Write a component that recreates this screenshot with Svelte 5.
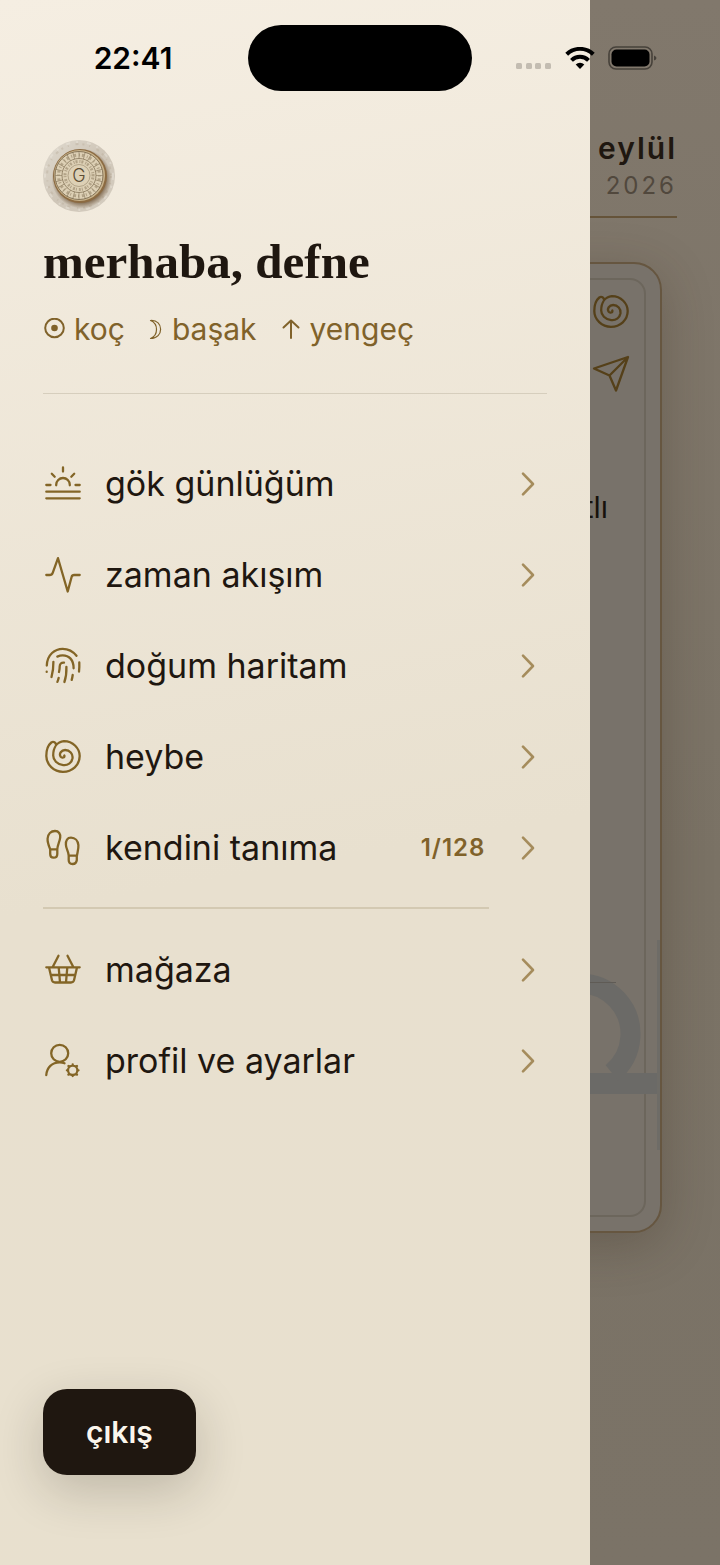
<script lang="ts">
  type Item = { label: string; icon: string; count?: string };

  const mainItems: Item[] = [
    { label: 'gök günlüğüm', icon: 'sun' },
    { label: 'zaman akışım', icon: 'pulse' },
    { label: 'doğum haritam', icon: 'finger' },
    { label: 'heybe', icon: 'spiral' },
    { label: 'kendini tanıma', icon: 'steps', count: '1/128' },
  ];
  const moreItems: Item[] = [
    { label: 'mağaza', icon: 'basket' },
    { label: 'profil ve ayarlar', icon: 'user' },
  ];

  const paths: Record<string, string> = {
    sun: 'M20 3.500v4M8.800 9.800l2.900 2.900M31.200 9.800l-2.900 2.900M3.300 21h4.200M32.500 21h4.200M13.200 21.300v-.5a6.800 6.800 0 0 1 13.600 0v.5M3.300 27.700h33.400M3.300 34.300h33.400',
    pulse: 'M3.300 20H6.600Q9 20 9.800 17.600L15 3.200 24.700 36.500 28.600 22Q29.100 20 31.200 20H36.700',
    finger:
      'M3.800 19.500C4.200 8.500 12 2.800 19.700 2.800 25.500 2.800 30 5.300 33.500 9.800M3.700 25.700v.2M36.300 16.500Q36.500 21 36 25.500M10.400 15.800Q10.500 24 8.500 31M14.300 10.600Q17 9.300 19.700 9.300C26 9.300 30.700 13.800 30.600 22.300M29.700 29Q29.400 31.500 28.700 33.800M16 26Q16.700 23.500 16.700 20.600C16.700 17.900 18.200 16.400 21 16.600M23.400 20.800Q23.700 29.500 21.400 36M15.700 31.800Q15.200 34 14.400 35.900',
    spiral:
      'M21.300 18.500c.8 2-2.400 3-3.700 1.200-1.900-3 .8-6.700 4.500-6.700 4.600 0 8 3.900 7.400 8.200-.8 4.600-4.800 7.500-9.300 6.900C14 27.300 10.200 23 10.200 18.500 10.200 10.500 14 5 21 4.200c9 0 15.700 7.200 15.700 14.900 0 9-7.500 15.700-16.700 15.700S3.300 27.500 3.300 19c0-5.800 1.700-10.800 5-13.500 2.300-1.500 4.700.2 4.800 2.700',
    steps:
      'M7.200 21.300C5.600 17.500 4.300 14 4.600 10.500 5 6.200 7.900 3 12 3c3.800 0 5.700 3 5.200 6.700-.6 4.200-2.800 7.300-2.900 11.600ZM7.200 21.300V26c0 2.300 1.200 3.700 3.400 3.700s3.700-1.400 3.700-3.700v-4.700M25.700 27.700C25.600 23.700 23 20.700 22.900 16.700 22.700 12.500 24.300 9.700 28 9.700c4.100 0 7 3.300 7.400 7.500.3 3.700-.9 7-1.500 10.500ZM25.700 27.700v4.300c0 2.600 1.700 4 3.900 4 2.300 0 3.900-1.400 4.200-4v-4.300',
    basket:
      'M3.300 17.300H36.700M15.500 5.700 9.700 17M24.500 5.700 30.300 17M6 17.500 9 30.300Q9.600 32.500 12 32.500H28Q30.400 32.500 31 30.300L34 17.500M7.700 25H32.300M15.700 17.500 17 32.300M24.300 17.500 23 32.300',
    user:
      'M3.300 34C3.800 26.500 9 21.300 16.700 21.300Q19.300 21.300 21.500 22.200M25.200 12.300a8.500 8.500 0 1 1-17 0a8.500 8.500 0 1 1 17 0M34.400 29.300a4.700 4.700 0 1 1-9.400 0a4.700 4.700 0 1 1 9.400 0M29.700 24.500v-1M29.700 34.100v1M24.900 29.300h-1M34.500 29.300h1M26.300 25.900l-.9-.9M33.100 25.900l.9-.9M26.300 32.700l-.9.9M33.100 32.700l.9.9',
  };

  const ticks = Array.from({ length: 24 }, (_, i) => i * 15);
</script>

{#snippet glyph(name: string)}
  <svg class="glyph" viewBox="0 0 40 40" aria-hidden="true"><path d={paths[name]} /></svg>
{/snippet}

{#snippet row(item: Item)}
  <li>
    <button class="row">
      {@render glyph(item.icon)}
      <span class="label">{item.label}</span>
      {#if item.count}<span class="count">{item.count}</span>{/if}
      <svg class="chevron" viewBox="0 0 16 26" aria-hidden="true"><path d="M4 2.700 14 13 4 23.300" /></svg>
    </button>
  </li>
{/snippet}

<div class="screen">
  <main class="page">
    <header class="date">
      <strong>eylül</strong>
      <span>2026</span>
    </header>
    <section class="card">
      <svg class="watermark" viewBox="0 0 160 220" aria-hidden="true">
        <rect class="edge" x="157" y="0" width="3" height="210" />
        <rect x="0" y="133" width="157" height="21" />
        <path class="ring" d="M48 133A50.500 50.500 0 1 1 112 133" />
        <path class="hair" d="M80 42.500H116" />
      </svg>
      <div class="frame">
        {@render glyph('spiral')}
        <svg class="glyph" viewBox="0 0 40 40" aria-hidden="true"><path d="M37 3 3 14.500 18.500 21.500 25 36.500ZM37 3 18.500 21.500" /></svg>
        <p>tlı</p>
      </div>
    </section>
  </main>

  <aside class="drawer">
    <svg class="avatar" viewBox="0 0 72 72" aria-hidden="true">
      <defs>
        <linearGradient id="stone" x1="0" y1="0" x2="1" y2="1">
          <stop offset="0" stop-color="#e0dacf" />
          <stop offset=".5" stop-color="#cfc6b8" />
          <stop offset="1" stop-color="#d5cdc0" />
        </linearGradient>
        <radialGradient id="shade">
          <stop offset=".78" stop-color="#6a5032" stop-opacity=".8" />
          <stop offset="1" stop-color="#6a5032" stop-opacity="0" />
        </radialGradient>
      </defs>
      <circle cx="36" cy="36" r="36" fill="url(#stone)" />
      <g fill="none" stroke="#b9ac99" stroke-width="2" stroke-dasharray="2 5 1 7 3 4" opacity=".4">
        <circle cx="36" cy="36" r="32" />
        <circle cx="36" cy="36" r="34" stroke="#f0ebe2" stroke-dasharray="4 6 2 9" />
      </g>
      <circle cx="38.500" cy="38.500" r="30" fill="url(#shade)" />
      <circle cx="37" cy="36" r="27" fill="#8c6b42" />
      <circle cx="36.500" cy="35.500" r="25.500" fill="#c8b38c" />
      <circle cx="36" cy="35.500" r="24" fill="#ddd0b5" />
      <g fill="none" stroke="#87765a">
        <circle cx="36" cy="35.500" r="24" />
        <circle cx="36" cy="35.500" r="17" stroke-width=".8" />
        <circle cx="36" cy="35.500" r="11" stroke-width=".5" />
        <circle cx="36" cy="35.500" r="20.500" stroke-width="3" stroke-dasharray="1 2 2 3" opacity=".5" />
        <circle cx="36" cy="35.500" r="14" stroke-width="3" stroke-dasharray="1 1 2 2" opacity=".5" />
        {#each ticks as a}
          <path d="M36 11.500v7" stroke-width=".6" transform="rotate({a} 36 35.500)" />
        {/each}
      </g>
      <text x="36" y="41.500" text-anchor="middle">G</text>
    </svg>

    <h1>merhaba, defne</h1>

    <p class="signs">
      <span>
        <svg class="sun" viewBox="0 0 22 22" aria-hidden="true"><circle cx="11.500" cy="10" r="9.300" /><circle class="dot" cx="11.500" cy="10" r="3.300" /></svg>
        koç
      </span>
      <span>
        <svg class="moon" viewBox="0 0 14 22" aria-hidden="true"><path d="M1.500 2.500C15 1.500 15 20.500 1.500 20.500 9.500 17.500 9.500 5.500 1.500 2.500Z" /></svg>
        başak
      </span>
      <span>
        <svg class="up" viewBox="0 0 20 22" aria-hidden="true"><path d="M10 20V2.500M2.500 9.500 10 2.500 17.500 9.500" /></svg>
        yengeç
      </span>
    </p>

    <nav>
      <ul>{#each mainItems as item}{@render row(item)}{/each}</ul>
      <hr />
      <ul>{#each moreItems as item}{@render row(item)}{/each}</ul>
    </nav>

    <button class="exit">çıkış</button>
  </aside>

  <div class="status">
    <time>22:41</time>
    <div class="island"></div>
    <div class="signal">
      <svg class="dots" viewBox="0 0 36 8" aria-hidden="true">
        {#each [0, 10, 19, 29] as x}<rect {x} y="1" width="6" height="6" rx="1.500" />{/each}
      </svg>
      <svg class="wifi" viewBox="0 0 30 22" aria-hidden="true">
        <path class="arc" d="M1.700 7.300A19 19 0 0 1 28.300 7.300M6.500 13.300A12 12 0 0 1 23.500 13.300" />
        <path d="M15 22 10.700 17.500A6.500 6.500 0 0 1 19.300 17.500Z" />
      </svg>
      <svg class="battery" viewBox="0 0 50 24" aria-hidden="true">
        <rect class="shell" x="1" y="1" width="43" height="22" rx="7" />
        <rect x="3.500" y="3.500" width="38" height="17" rx="5" />
        <path class="cap" d="M46 9.500Q48.500 10.500 48.500 12T46 14.500Z" />
      </svg>
    </div>
  </div>
</div>

<style>
  :global(body) { margin: 0; background: #7b7367; }
  * { box-sizing: border-box; }
  .screen {
    position: relative;
    min-height: 100vh;
    overflow: hidden;
    font-family: Inter, "Noto Sans", sans-serif;
    color: #1f1710;
    background: linear-gradient(#81786c, #7a7265 55%, #7b7367);
  }
  .glyph { flex: none; width: 40px; height: 40px; fill: none; stroke: #836526; stroke-width: 2.3; stroke-linecap: round; stroke-linejoin: round; }

  .page { padding: 129px 43px 0; }
  .date {
    display: flex;
    flex-direction: column;
    align-items: flex-end;
    height: 89px;
    border-bottom: 2px solid #655339;
  }
  .date strong { font-size: 30px; line-height: 38px; font-weight: 600; letter-spacing: 2px; }
  .date span { font-size: 24px; line-height: 38px; letter-spacing: 3px; color: #51483d; }
  .card {
    position: relative;
    margin: 44px 15px 0;
    padding: 14px;
    aspect-ratio: 604 / 971;
    border: 2px solid #665640;
    border-radius: 28px;
    background: #78726a;
    box-shadow: 0 12px 50px rgba(60, 48, 34, .3);
  }
  .frame {
    display: flex;
    flex-direction: column;
    align-items: flex-end;
    gap: 22px;
    height: 100%;
    padding: 12px 13px;
    border: 2px solid #6c665c;
    border-radius: 16px;
  }
  .frame .glyph { stroke: #554019; }
  .frame p { margin: 73px 23px 0; font-size: 30px; line-height: 36px; color: #17110c; }
  .watermark { position: absolute; right: 0; bottom: 71px; width: 160px; height: 220px; fill: #6b6a67; }
  .watermark .ring { fill: none; stroke: #6b6a67; stroke-width: 20; }
  .watermark .edge { fill: #6e6c67; }
  .watermark .hair { stroke: #5f5b55; stroke-width: 1; fill: none; }

  .drawer {
    position: absolute;
    inset: 0 auto 0 0;
    display: flex;
    flex-direction: column;
    width: 82%;
    padding: 140px 43px 90px;
    background: linear-gradient(170deg, #f5eee2, #e8e0cf 55%, #e8e0ce);
  }
  .avatar { width: 72px; height: 72px; }
  .avatar text { font: 300 18px Inter, sans-serif; fill: #5c4c34; }
  h1 {
    margin: 22px 0 0;
    font: 700 49px/56px "Liberation Serif", serif;
    white-space: nowrap;
  }
  .signs {
    display: flex;
    gap: 24px;
    margin: 18px 0 0;
    padding-bottom: 43px;
    border-bottom: 1px solid #d6cebd;
    font-size: 30px;
    line-height: 42px;
    color: #80622a;
    white-space: nowrap;
  }
  .signs span { display: flex; align-items: center; gap: 9px; }
  .signs svg { height: 22px; fill: none; stroke: #80622a; stroke-width: 2; stroke-linecap: round; stroke-linejoin: round; }
  .signs .sun { width: 22px; }
  .signs .sun .dot { fill: #80622a; stroke: none; }
  .signs .moon { width: 14px; stroke-width: 1.200; }
  .signs .up { width: 20px; }

  nav { padding-top: 44px; }
  ul { margin: 0; padding: 0; list-style: none; }
  hr { height: 2px; margin: 14px 58px 15px 0; border: 0; background: #d3c9b2; }
  .row {
    display: flex;
    align-items: center;
    width: 100%;
    height: 91px;
    padding: 0 12px 0 0;
    border: 0;
    background: none;
    font: 34px/44px Inter, "Noto Sans", sans-serif;
    color: #1f1710;
    text-align: left;
    white-space: nowrap;
  }
  .label { flex: 1; margin-left: 22px; }
  .count { margin-right: 34px; font-size: 24px; font-weight: 600; letter-spacing: 1px; color: #80622a; }
  .chevron { flex: none; width: 16px; height: 26px; fill: none; stroke: #a58c5c; stroke-width: 2.6; stroke-linecap: round; stroke-linejoin: round; }

  .exit {
    align-self: flex-start;
    margin-top: auto;
    height: 86px;
    padding: 0 43px;
    border: 0;
    border-radius: 24px;
    background: #1f1710;
    color: #fbf6ec;
    font: 600 30px/40px Inter, "Noto Sans", sans-serif;
    box-shadow: 0 16px 50px rgba(31, 23, 16, .2);
  }

  .status {
    position: absolute;
    inset: 25px 0 auto;
    display: grid;
    grid-template-columns: 1fr 224px 1fr;
    align-items: center;
    color: #000;
  }
  time { padding-left: 18px; font-size: 30px; line-height: 40px; font-weight: 600; text-align: center; }
  .island { height: 66px; border-radius: 33px; background: #000; }
  .signal { display: flex; justify-content: center; align-items: center; gap: 13px; padding-right: 18px; }
  .dots { width: 36px; height: 8px; margin-top: 16px; fill: #c3bcb1; }
  .wifi { width: 30px; height: 22px; }
  .wifi .arc { fill: none; stroke: #000; stroke-width: 4; }
  .battery { width: 50px; height: 24px; }
  .battery .shell { fill: none; stroke: #46413a; stroke-width: 1.600; }
  .battery .cap { fill: #46413a; }
</style>
